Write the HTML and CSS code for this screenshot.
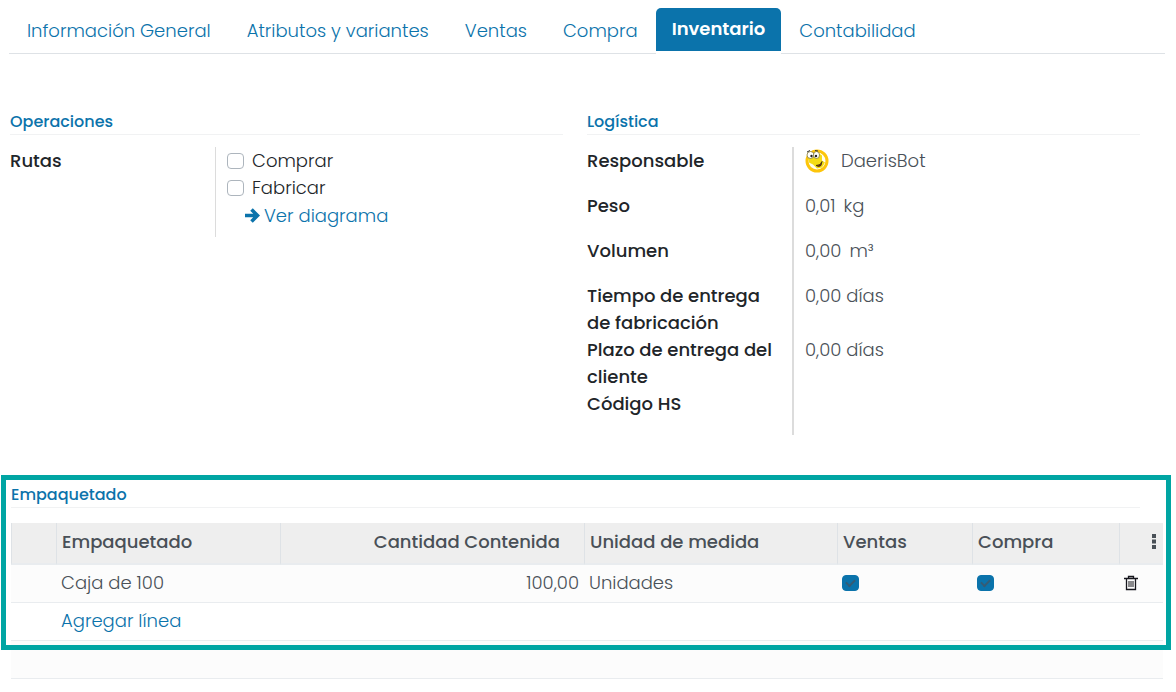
FILE: index.html
```html
<!DOCTYPE html>
<html lang="es">
<head>
<meta charset="utf-8">
<title>Inventario</title>
<link rel="stylesheet" href="styles.css">
</head>
<body>
<nav class="tabs">
  <a class="tab" href="#general">Información General</a>
  <a class="tab" href="#atributos">Atributos y variantes</a>
  <a class="tab" href="#ventas">Ventas</a>
  <a class="tab" href="#compra">Compra</a>
  <a class="tab tab-active" href="#inventario" aria-current="page">Inventario</a>
  <a class="tab" href="#contabilidad">Contabilidad</a>
</nav>
<main>
  <div class="groups">
    <section>
      <h2 class="group-title">Operaciones</h2>
      <div class="fields fields-routes">
        <div class="label" id="rutas">Rutas</div>
        <div class="value value-routes" role="group" aria-labelledby="rutas">
          <label class="option"><input class="check" type="checkbox">Comprar</label>
          <label class="option"><input class="check" type="checkbox">Fabricar</label>
          <a class="diagram" href="#diagrama"><svg class="arrow" viewBox="0 0 15 15" aria-hidden="true"><path d="M0 7.500h12M6.500 1.500l6 6-6 6" fill="none" stroke="currentColor" stroke-width="3.600"/></svg>Ver diagrama</a>
        </div>
      </div>
    </section>
    <section>
      <h2 class="group-title">Logística</h2>
      <div class="fields">
        <div class="label spaced">Responsable</div>
        <div class="value person">
          <svg class="avatar" viewBox="0 0 24 24" aria-hidden="true">
            <circle cx="12" cy="12.500" r="10" fill="#fffdf0" stroke="#fdc50a" stroke-width="3"/>
            <path d="M3 8q8-7 14-1l0 5 3 2-3 5-5 1-4-4-4-2z" fill="#f3dc16"/>
            <ellipse cx="5.500" cy="6.500" rx="3.500" ry="3.500" fill="#fff" stroke="#776a20" stroke-width=".7"/>
            <ellipse cx="11.500" cy="6.500" rx="3" ry="3.500" fill="#fff" stroke="#776a20" stroke-width=".7"/>
            <circle cx="6.500" cy="7.500" r="1.200" fill="#222"/><circle cx="11" cy="7.500" r="1.200" fill="#222"/>
            <path d="M2 3.500l3-1.500M10 2l3 .5" stroke="#333" fill="none"/>
            <path d="M11 17q5 0 6-4l-1 4q-2 2-5 0z" fill="#8b260b" stroke="#352a10" stroke-width=".8"/>
          </svg>
          <span>DaerisBot</span>
        </div>
        <div class="label spaced">Peso</div><div class="value measure"><span>0,01</span><span>kg</span></div>
        <div class="label spaced">Volumen</div><div class="value measure"><span>0,00</span><span>m³</span></div>
        <div class="label">Tiempo de entrega de fabricación</div><div class="value">0,00 días</div>
        <div class="label">Plazo de entrega del cliente</div><div class="value">0,00 días</div>
        <div class="label spaced">Código HS</div><div class="value"></div>
      </div>
    </section>
  </div>
  <section class="packaging">
    <h2 class="group-title packaging-title">Empaquetado</h2>
    <table class="lines">
      <colgroup><col class="c-handle"><col class="c-name"><col class="c-qty"><col class="c-unit"><col class="c-sales"><col class="c-buy"><col class="c-menu"></colgroup>
      <thead>
        <tr>
          <th></th><th>Empaquetado</th><th class="num">Cantidad Contenida</th><th>Unidad de medida</th><th>Ventas</th><th>Compra</th>
          <th class="menu-cell"><button class="icon-button" type="button" aria-label="Columnas opcionales"><svg class="dots" viewBox="0 0 4 15" aria-hidden="true"><path d="M0 0h4v4H0zM0 5.500h4v4H0zM0 11h4v4H0z" fill="#495057"/></svg></button></th>
        </tr>
      </thead>
      <tbody>
        <tr>
          <td></td><td>Caja de 100</td><td class="num">100,00</td><td>Unidades</td>
          <td><input class="check" type="checkbox" aria-label="Ventas" checked></td>
          <td><input class="check" type="checkbox" aria-label="Compra" checked></td>
          <td><button class="icon-button" type="button" aria-label="Eliminar"><svg class="trash" viewBox="0 0 14 16" aria-hidden="true"><path d="M0 3.500h14M4.500 3V1.500h5V3M2.500 4v10.500h9V4" fill="none" stroke="#16161d" stroke-width="1.300"/><path d="M5 6v6M7 6v6M9 6v6" stroke="#16161d" stroke-width="1"/></svg></button></td>
        </tr>
        <tr><td></td><td colspan="6"><a href="#agregar">Agregar línea</a></td></tr>
        <tr><td colspan="7"></td></tr>
      </tbody>
    </table>
    <div class="highlight"></div>
  </section>
</main>
</body>
</html>
```
FILE: styles.css
```css
* { box-sizing: border-box; }
body {
  margin: 0;
  background: #fff;
  color: #495057;
  font: 300 18px/27px Poppins, Inter, sans-serif;
}
a { color: #0b73ab; text-decoration: none; }
.tabs {
  display: flex;
  margin: 8px 11px 0 9px;
  height: 46px;
  border-bottom: 1px solid #dee2e6;
}
.tab { padding: 9px 18px; white-space: nowrap; }
.tab-active {
  height: 46px;
  padding: 7px 16px;
  border-bottom: 3px solid #fff;
  border-radius: 5px 5px 0 0;
  background: #0b73ab;
  background-clip: padding-box;
  color: #fff;
  font-weight: 600;
}
.groups {
  display: grid;
  grid-template-columns: 1fr 1fr;
  column-gap: 24px;
  margin: 56px 36px 0 10px;
}
.group-title {
  margin: 0;
  height: 25px;
  border-bottom: 1px solid #f1f2f3;
  color: #0b73ab;
  font-size: 16px;
  font-weight: 500;
  line-height: 24px;
}
.fields {
  display: grid;
  grid-template-columns: 205px 1fr;
  margin-top: 12px;
}
.label { padding-right: 16px; color: #212529; font-weight: 500; }
.spaced { padding-bottom: 18px; }
.value { padding-left: 11px; border-left: 2px solid #dcdcdc; }
.value-routes { border-left-width: 1px; color: #212529; padding-bottom: 8px; }
.option { display: flex; align-items: center; gap: 8px; }
.diagram { display: flex; align-items: center; gap: 4px; margin-top: 1px; padding-left: 18px; }
.arrow { width: 15px; height: 15px; }
.person { display: flex; align-items: flex-start; gap: 12px; }
.avatar { width: 24px; height: 27px; }
.measure { display: flex; gap: 8px; }
.check {
  appearance: none;
  width: 17px;
  height: 16px;
  margin: 0;
  border: 1px solid #adb5bd;
  border-radius: 4px;
  background: #fff;
}
.check:checked {
  display: grid;
  place-items: center;
  border-color: #0b73ab;
  background: #0b73ab;
}
.check:checked::after {
  content: "";
  width: 7px;
  height: 4px;
  margin-bottom: 2px;
  border: solid #365c75;
  border-width: 0 0 2px 2px;
  transform: rotate(-45deg);
}
.packaging {
  position: relative;
  margin: 40px 5px 0 1px;
  padding: 8px 8px 0 10px;
}
.packaging-title { margin-right: 23px; }
.lines {
  width: 100%;
  margin-top: 15px;
  border-collapse: separate;
  border-spacing: 0;
  table-layout: fixed;
}
.c-handle { width: 45px; }
.c-name { width: 224px; }
.c-qty { width: 304px; }
.c-sales { width: 135px; }
.c-buy { width: 147px; }
.c-menu { width: 44px; }
.lines th {
  height: 42px;
  padding: 0 5px 3px;
  border-left: 1px solid #dee2e6;
  border-bottom: 2px solid #e9ecef;
  background: #eee;
  font-weight: 500;
  text-align: left;
}
.lines td {
  height: 38px;
  padding: 0 5px 2px;
  border-bottom: 1px solid #e9ecef;
}
.lines tbody tr:nth-child(odd) { background: #fcfcfc; }
.lines .num { text-align: right; }
.lines th.num { padding-right: 24px; }
.lines .check { display: grid; }
.icon-button {
  display: flex;
  padding: 0;
  border: 0;
  background: none;
}
.lines .menu-cell { padding-right: 7px; }
.menu-cell .icon-button { margin-left: auto; }
.dots { width: 4px; height: 15px; }
.trash { width: 14px; height: 16px; }
.highlight {
  position: absolute;
  inset: 0 0 29px;
  border: 5px solid #00a5a3;
  pointer-events: none;
}
```
